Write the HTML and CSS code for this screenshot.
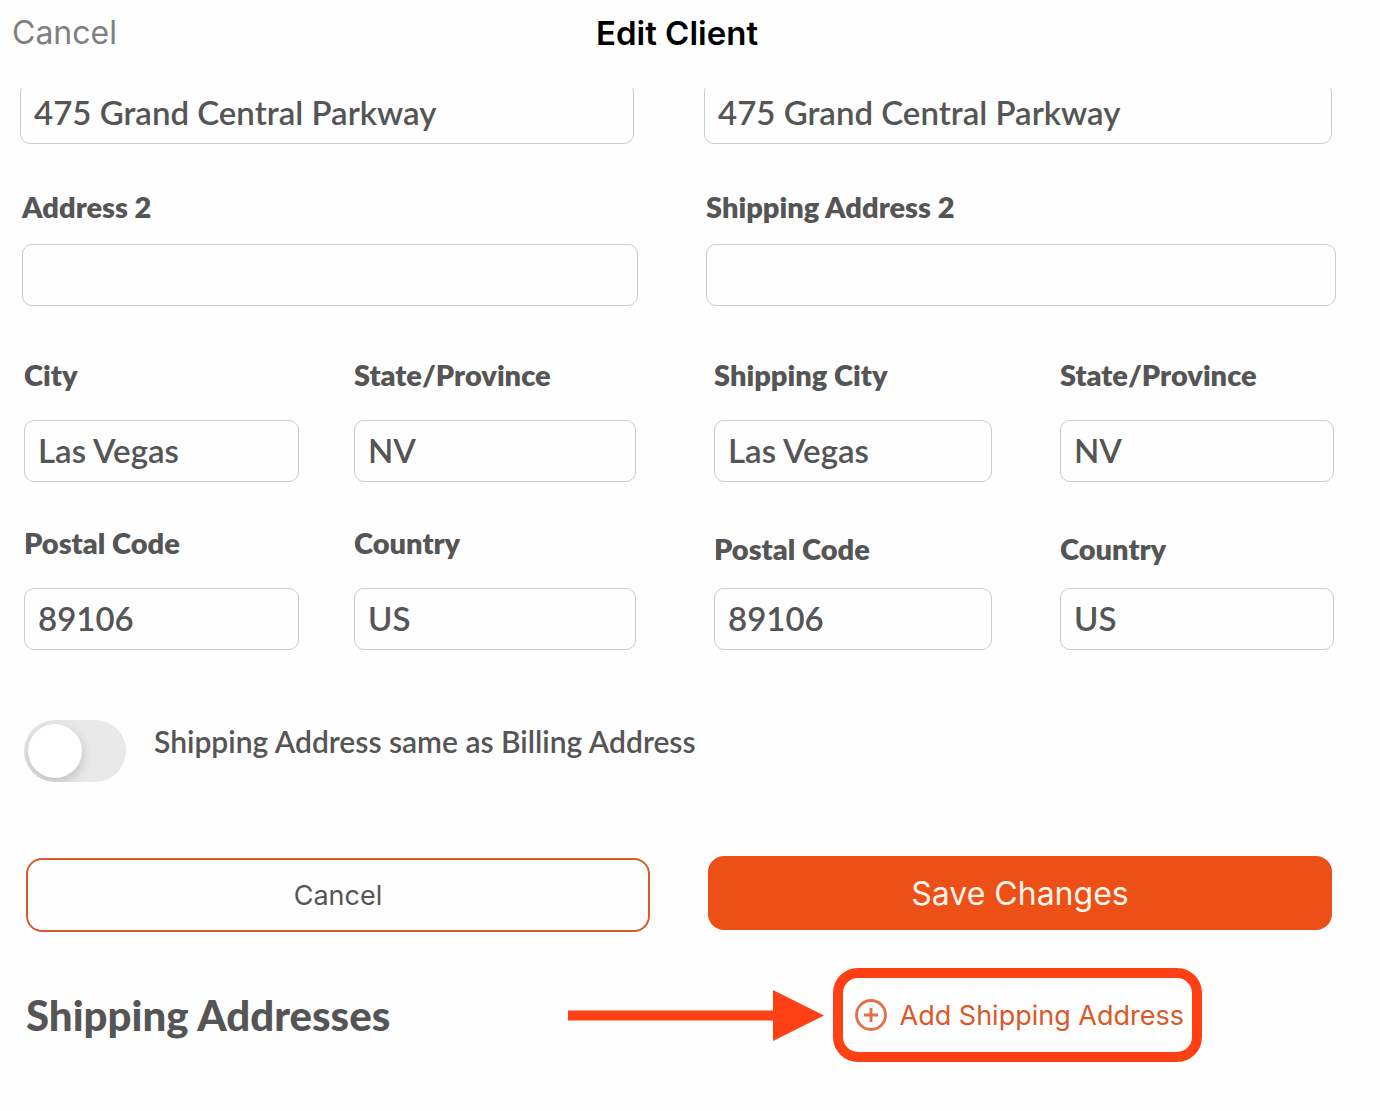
FILE: index.html
```html
<!DOCTYPE html>
<html lang="en">
<head>
  <meta charset="UTF-8" />
  <meta name="viewport" content="width=device-width, initial-scale=1.0" />
  <title>Edit Client</title>
  <link rel="stylesheet" href="styles.css">
</head>
<body>
  <header class="topbar">
    <button type="button" class="topbar-cancel">Cancel</button>
    <h1>Edit Client</h1>
  </header>

  <main>
    <form id="clientForm">
      <div class="row row-street">
        <input type="text" aria-label="Address" value="475 Grand Central Parkway" />
        <input type="text" aria-label="Shipping Address" value="475 Grand Central Parkway" />
      </div>

      <div class="row row-address">
        <div class="field">
          <label for="address2">Address 2</label>
          <input type="text" id="address2" />
        </div>
        <div class="field">
          <label for="shipAddress2">Shipping Address 2</label>
          <input type="text" id="shipAddress2" />
        </div>
      </div>

      <div class="row row-city">
        <div class="pair billing">
          <div class="field">
            <label for="city">City</label>
            <input type="text" id="city" value="Las Vegas" />
          </div>
          <div class="field">
            <label for="state">State/Province</label>
            <input type="text" id="state" value="NV" />
          </div>
        </div>
        <div class="pair shipping">
          <div class="field">
            <label for="shipCity">Shipping City</label>
            <input type="text" id="shipCity" value="Las Vegas" />
          </div>
          <div class="field">
            <label for="shipState">State/Province</label>
            <input type="text" id="shipState" value="NV" />
          </div>
        </div>
      </div>

      <div class="row row-postal">
        <div class="pair billing">
          <div class="field">
            <label for="postal">Postal Code</label>
            <input type="text" id="postal" value="89106" />
          </div>
          <div class="field">
            <label for="country">Country</label>
            <input type="text" id="country" value="US" />
          </div>
        </div>
        <div class="pair shipping">
          <div class="field">
            <label for="shipPostal">Postal Code</label>
            <input type="text" id="shipPostal" value="89106" />
          </div>
          <div class="field">
            <label for="shipCountry">Country</label>
            <input type="text" id="shipCountry" value="US" />
          </div>
        </div>
      </div>

      <div class="same-address">
        <input type="checkbox" role="switch" id="sameAddress" class="switch" />
        <label for="sameAddress">Shipping Address same as Billing Address</label>
      </div>

      <div class="actions">
        <button type="button" class="btn btn-cancel">Cancel</button>
        <button type="submit" class="btn btn-save">Save Changes</button>
      </div>
    </form>

    <section class="addresses">
      <h2>Shipping Addresses</h2>
      <svg class="arrow" width="256" height="52" viewBox="0 0 256 52" aria-hidden="true">
        <path d="M0 21.500H205V1L256 26.500L205 52V31.500H0Z" fill="#ff4014" />
      </svg>
      <div class="callout">
        <button type="button" class="add-address">
          <svg width="34" height="34" viewBox="0 0 34 34" fill="none" stroke="#e2704a" aria-hidden="true">
            <circle cx="17" cy="17" r="14.500" stroke-width="2.800" />
            <path d="M17 10V24M10 17H24" stroke-width="2.800" />
          </svg>
          Add Shipping Address
        </button>
      </div>
    </section>
  </main>
</body>
</html>
```
FILE: styles.css
```css
* {
  box-sizing: border-box;
}
body {
  margin: 0;
  background: #fefefe;
  color: #555;
  font-family: 'Lato', sans-serif;
}
h1, h2 {
  margin: 0;
}
button {
  font-family: 'Inter', sans-serif;
  cursor: pointer;
}

/* top bar */
.topbar {
  display: grid;
  grid-template-columns: 1fr auto 1fr;
  height: 88px;
  padding: 13px 38px 0 12px;
  align-items: start;
}
.topbar-cancel {
  justify-self: start;
  padding: 0;
  border: none;
  background: none;
  color: #808080;
  font-size: 32px;
  line-height: 40px;
}
.topbar h1 {
  color: #000;
  font-family: 'Inter', sans-serif;
  font-size: 33px;
  font-weight: 600;
  line-height: 40px;
}

/* form rows */
.row {
  display: grid;
  grid-template-columns: 616fr 630fr;
}
/* scrolled partly under the top bar */
.row-street {
  grid-template-rows: 56px;
  padding: 0 48px 0 20px;
  column-gap: 70px;
  align-items: end;
  overflow: hidden;
}
.row-address {
  margin-top: 46px;
  padding: 0 44px 0 22px;
  column-gap: 68px;
}
.row-city,
.row-postal {
  grid-template-columns: 612fr 620fr;
  padding: 0 46px 0 24px;
  column-gap: 78px;
}
.row-city {
  margin-top: 52px;
}
.row-postal {
  margin-top: 44px;
}
.pair {
  display: grid;
}
.billing {
  grid-template-columns: 275fr 282fr;
  column-gap: 55px;
}
.shipping {
  grid-template-columns: 278fr 274fr;
  column-gap: 68px;
}
.field {
  display: flex;
  flex-direction: column;
  gap: 20px;
}
.pair .field {
  gap: 28px;
}
.row-postal .shipping {
  padding-top: 6px;
}
.row-postal .shipping .field {
  gap: 22px;
}
.field label {
  font-size: 29px;
  font-weight: 800;
  line-height: 34px;
}
input[type="text"] {
  width: 100%;
  min-width: 0;
  height: 62px;
  padding: 0 13px 2px;
  border: 1px solid #ccc;
  border-radius: 10px;
  background: #fefefe;
  color: #555;
  font-family: 'Lato', sans-serif;
  font-size: 33px;
  font-weight: 600;
}

/* same address switch */
.same-address {
  display: flex;
  gap: 28px;
  margin-top: 70px;
  padding-left: 24px;
}
.same-address label {
  font-size: 30px;
  font-weight: 600;
  line-height: 42px;
}
.switch {
  appearance: none;
  display: flex;
  align-items: center;
  width: 102px;
  height: 62px;
  margin: 0;
  padding: 4px;
  border-radius: 31px;
  background: #e9e9ea;
  overflow: hidden;
  cursor: pointer;
}
.switch::before {
  content: "";
  width: 54px;
  height: 54px;
  border-radius: 50%;
  background: #fff;
  box-shadow: 0 4px 12px rgba(0, 0, 0, 0.2);
}
.switch:checked {
  justify-content: flex-end;
  background: #ec5016;
}

/* buttons */
.actions {
  display: grid;
  grid-template-columns: 1fr 1fr;
  column-gap: 58px;
  height: 76px;
  margin-top: 74px;
  padding: 0 48px 0 26px;
}
.btn {
  height: 74px;
  border-radius: 16px;
}
.btn-cancel {
  align-self: end;
  border: 2px solid #d9592b;
  background: #fefefe;
  color: #555;
  font-size: 27px;
}
.btn-save {
  align-self: start;
  border: none;
  background: #ec5016;
  color: #fff5ea;
  font-size: 32px;
}

/* shipping addresses */
.addresses {
  display: flex;
  align-items: center;
  margin-top: 36px;
  padding: 0 178px 0 26px;
}
.addresses h2 {
  font-size: 42px;
  font-weight: 900;
  line-height: 48px;
}
.arrow {
  flex: none;
  margin-left: auto;
}
.callout {
  margin-left: 9px;
  border: 10px solid #ff4014;
  border-radius: 25px;
}
.add-address {
  display: flex;
  align-items: center;
  gap: 12px;
  height: 74px;
  padding: 0 8px 0 11px;
  border: none;
  background: none;
  color: #d9592b;
  font-size: 27px;
  white-space: nowrap;
}
```
